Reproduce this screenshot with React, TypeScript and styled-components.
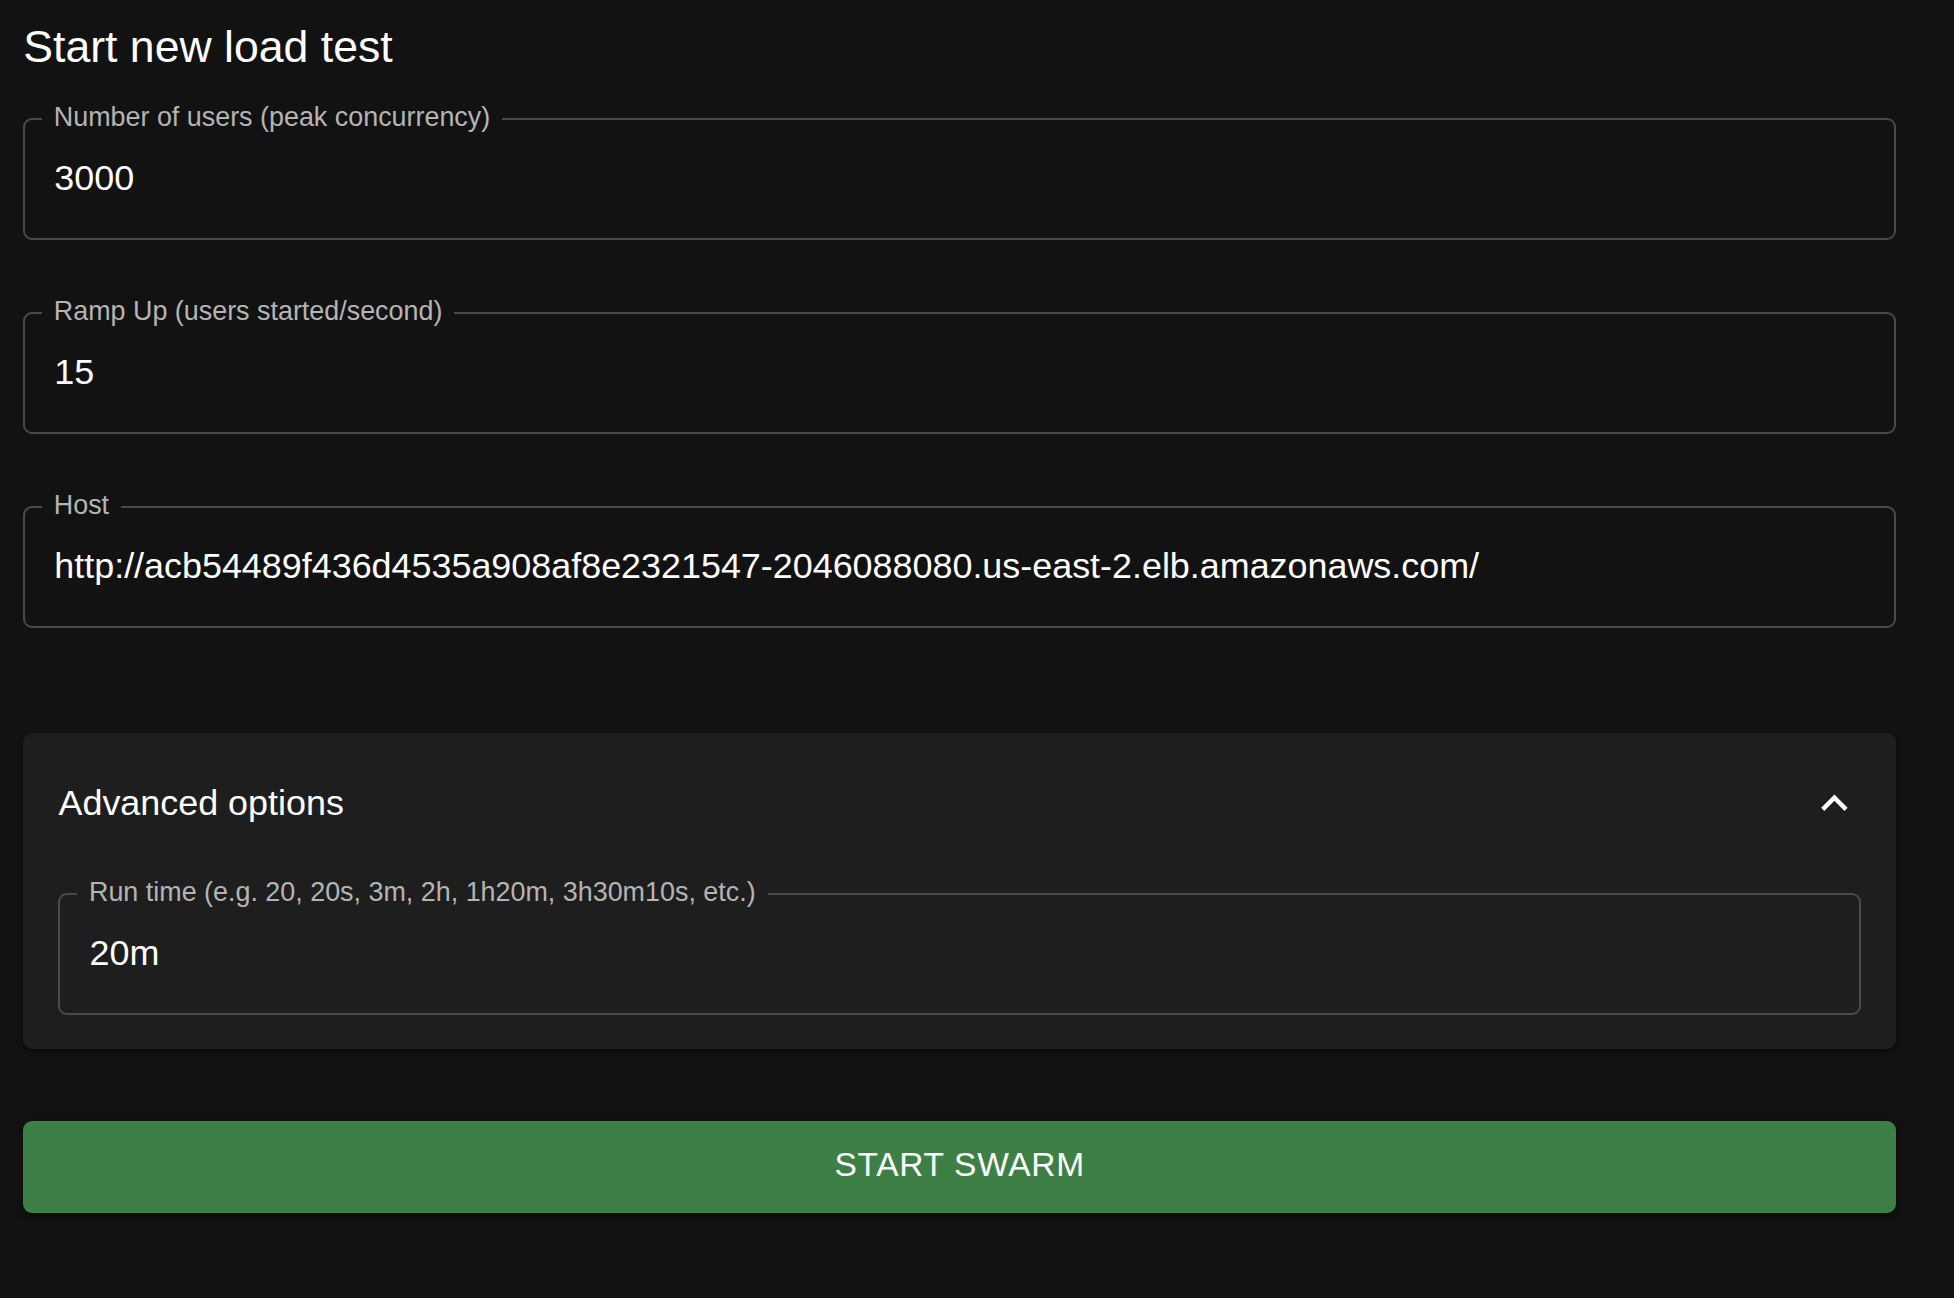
import React from "react";
import styled, { createGlobalStyle } from "styled-components";

const GlobalStyle = createGlobalStyle`
  html, body {
    margin: 0;
    padding: 0;
    background: #121212;
  }
  body {
    font-family: "Liberation Sans", Arial, Helvetica, sans-serif;
    color: #ffffff;
  }
  * { box-sizing: border-box; }
`;

const Page = styled.div`
  padding: 12px 0 0 23.3px;
  min-height: 1298px;
  background: #121212;
`;

const Form = styled.form`
  width: 1872.7px;
  display: flex;
  flex-direction: column;
`;

const Title = styled.h1`
  margin: 0;
  font-size: 44.6px;
  font-weight: 400;
  line-height: 70.4px;
  color: #ffffff;
`;

const Block = styled.div<{ $above: number }>`
  margin-top: ${(p) => p.$above}px;
`;

const Fieldset = styled.fieldset`
  margin: 0;
  padding: 0;
  min-inline-size: 0;
  border: 2px solid #4a4a4a;
  border-radius: 9px;
`;

const Legend = styled.legend`
  margin-left: 16.5px;
  padding: 0 12px 4px;
  font-size: 26.9px;
  line-height: 26px;
  color: #b4b4b4;
`;

const Input = styled.input`
  display: block;
  width: 100%;
  height: 104px;
  padding: 19.7px 29px 33.7px;
  margin: 0;
  border: none;
  outline: none;
  background: transparent;
  color: #ffffff;
  font-family: "Liberation Sans", Arial, Helvetica, sans-serif;
  font-size: 35.9px;
`;

const Panel = styled.section`
  background: #1e1e1e;
  border-radius: 9px;
  box-shadow: 0 4.4px 2.2px -2.2px rgba(0, 0, 0, 0.2),
    0 2.2px 2.2px 0 rgba(0, 0, 0, 0.14), 0 2.2px 6.6px 0 rgba(0, 0, 0, 0.12);
`;

const Summary = styled.div`
  height: 140.8px;
  padding: 0 35.2px;
  display: flex;
  align-items: center;
  justify-content: space-between;
`;

const SummaryText = styled.span`
  font-size: 35.9px;
  line-height: 52.8px;
  color: #ffffff;
`;

const ChevronIcon = styled.svg`
  width: 52.8px;
  height: 52.8px;
  display: block;
  fill: #ffffff;
`;

const Details = styled.div`
  padding: 4.6px 35.2px 34.6px;
`;

const SubmitButton = styled.button`
  height: 92.4px;
  width: 100%;
  border: none;
  border-radius: 9px;
  background: #3e7f46;
  color: #ffffff;
  font-family: "Liberation Sans", Arial, Helvetica, sans-serif;
  font-size: 33.5px;
  font-weight: 400;
  letter-spacing: 0.7px;
  line-height: 57.75px;
  padding: 0 0 4px;
  text-transform: uppercase;
  box-shadow: 0 6.6px 2.2px -4.4px rgba(0, 0, 0, 0.2),
    0 4.4px 4.4px 0 rgba(0, 0, 0, 0.14), 0 2.2px 11px 0 rgba(0, 0, 0, 0.12);
  cursor: pointer;
`;

type FieldProps = { label: string; value: string };

function OutlinedField({ label, value }: FieldProps) {
  return (
    <Fieldset>
      <Legend>{label}</Legend>
      <Input readOnly defaultValue={value} />
    </Fieldset>
  );
}

function ExpandLess() {
  return (
    <ChevronIcon viewBox="0 0 24 24" aria-hidden="true">
      <path d="M12 8l-6 6 1.41 1.41L12 10.83l4.59 4.58L18 14z" />
    </ChevronIcon>
  );
}

export default function App() {
  return (
    <>
      <GlobalStyle />
      <Page>
        <Form onSubmit={(e) => e.preventDefault()}>
          <Title>Start new load test</Title>
          <Block $above={21.1}>
            <OutlinedField label="Number of users (peak concurrency)" value="3000" />
          </Block>
          <Block $above={58}>
            <OutlinedField label="Ramp Up (users started/second)" value="15" />
          </Block>
          <Block $above={58}>
            <OutlinedField
              label="Host"
              value="http://acb54489f436d4535a908af8e2321547-2046088080.us-east-2.elb.amazonaws.com/"
            />
          </Block>
          <Block $above={105.8}>
            <Panel>
              <Summary>
                <SummaryText>Advanced options</SummaryText>
                <ExpandLess />
              </Summary>
              <Details>
                <OutlinedField
                  label="Run time (e.g. 20, 20s, 3m, 2h, 1h20m, 3h30m10s, etc.)"
                  value="20m"
                />
              </Details>
            </Panel>
          </Block>
          <Block $above={71.7}>
            <SubmitButton type="submit">Start Swarm</SubmitButton>
          </Block>
        </Form>
      </Page>
    </>
  );
}
